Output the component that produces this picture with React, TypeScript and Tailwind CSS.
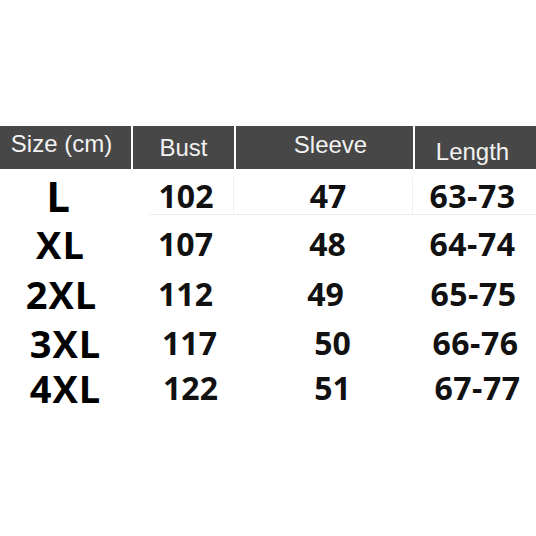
import React from 'react';

const heading = [
  { label: 'Size (cm)', cls: 'pt-[4px] pr-[8px]' },
  { label: 'Bust', cls: 'pt-[8px] pr-[0px]' },
  { label: 'Sleeve', cls: 'pt-[5px] pl-[12px]' },
  { label: 'Length', cls: 'pt-[12px] pr-[6px]' }
];

interface SizeRow {
  size: string;
  bust: string;
  sleeve: string;
  length: string;
  h: string;
  s: string;
  b: string;
  sl: string;
  l: string;
}

const rows: SizeRow[] = [
  { size: 'L', bust: '102', sleeve: '47', length: '63-73', h: 'h-[46px] pt-[8px]', s: 'mr-[14px] text-[42px]', b: 'ml-[6px]', sl: 'ml-[8px]', l: 'mr-[6px]' },
  { size: 'XL', bust: '107', sleeve: '48', length: '64-74', h: 'h-[50px] pt-[8px]', s: 'mr-[10px]', b: 'ml-[4px]', sl: 'ml-[6px]', l: 'mr-[6px]' },
  { size: '2XL', bust: '112', sleeve: '49', length: '65-75', h: 'h-[49px] pt-[8px]', s: 'mr-[8px]', b: 'ml-[4px]', sl: 'ml-[2px]', l: 'mr-[4px]' },
  { size: '3XL', bust: '117', sleeve: '50', length: '66-76', h: 'h-[49px] pt-[8px]', s: 'ml-[0px]', b: 'ml-[12px]', sl: 'ml-[16px]', l: 'ml-[0px]' },
  { size: '4XL', bust: '122', sleeve: '51', length: '67-77', h: 'h-[46px] pt-[4px]', s: 'ml-[0px]', b: 'ml-[14px]', sl: 'ml-[16px]', l: 'ml-[4px]' }
];

export default function App() {
  return (
    <div className="w-[536px] h-[536px] bg-white overflow-hidden pt-[126px] font-['Open_Sans',sans-serif]">
      {/* header band */}
      <div className="grid grid-cols-[131px_101px_177px_1fr] gap-x-[2px] h-[43px] bg-white">
        {heading.map((c) => (
          <div
            key={c.label}
            className={`bg-[#474747] flex justify-center text-[#f2f2f2] text-[24px] leading-[28px] font-['Liberation_Sans',sans-serif] ${c.cls}`}
          >
            {c.label}
          </div>
        ))}
      </div>

      {rows.map((r, i) => (
        <div
          key={r.size}
          className={`grid grid-cols-[131px_101px_177px_1fr] gap-x-[2px] ${r.h} ${
            i === 0
              ? 'bg-[linear-gradient(#ececec,#ececec)] bg-no-repeat bg-[length:386px_1px] bg-[position:150px_100%]'
              : ''
          }`}
        >
          <div className="flex items-center justify-center">
            <span className={`font-bold text-black leading-[34px] text-[38px] tracking-[1px] ${r.s}`}>{r.size}</span>
          </div>
          <div className={`flex items-center justify-center ${i === 0 ? 'border-r border-[#f0f0f0]' : ''}`}>
            <span className={`font-bold text-[#111] text-[32px] leading-[30px] ${r.b}`}>{r.bust}</span>
          </div>
          <div className={`flex items-center justify-center ${i === 0 ? 'border-r border-[#f0f0f0]' : ''}`}>
            <span className={`font-bold text-[#111] text-[32px] leading-[30px] ${r.sl}`}>{r.sleeve}</span>
          </div>
          <div className="flex items-center justify-center">
            <span className={`font-bold text-[#111] text-[32px] leading-[30px] tracking-[0.5px] ${r.l}`}>{r.length}</span>
          </div>
        </div>
      ))}
    </div>
  );
}
